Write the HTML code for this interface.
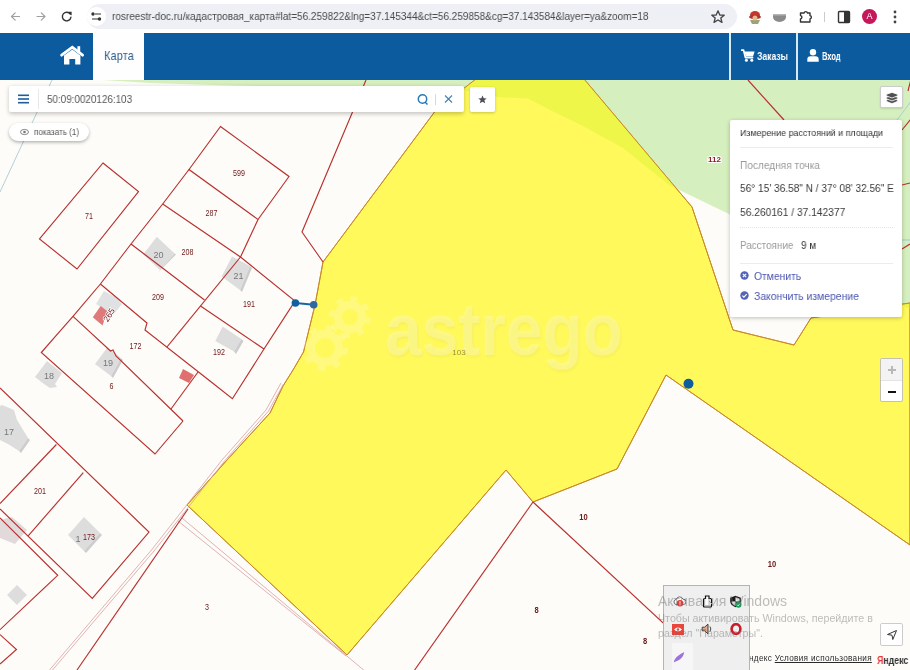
<!DOCTYPE html>
<html><head><meta charset="utf-8">
<style>
*{box-sizing:border-box}
html,body{margin:0;padding:0}
body{width:910px;height:670px;overflow:hidden;position:relative;background:#fdfcf8;font-family:"Liberation Sans",sans-serif}
.abs{position:absolute;will-change:transform}
.sx{will-change:transform}
.sx{display:inline-block;transform-origin:0 50%;white-space:nowrap}
</style></head><body>
<svg class="abs" style="left:0;top:80px" width="910" height="590" viewBox="0 80 910 590">
<defs>
<clipPath id="ycl"><polygon id="ypoly" points="323,262 436,110 476,79 584,79 692,207 733,330 794,345 811,318 910,303 910,545 666,375 617,469 533,502 506,470 347,655 187,505 227,460 270,413 283,386 293,370 303.5,352 315,305"/></clipPath>
</defs>
<rect x="0" y="80" width="910" height="590" fill="#fdfcf8"/>
<!-- green -->
<polygon points="88,79 150,83 230,85.5 300,87 470,91 497,97 528,98.5 552,111 583,126 623,148 669,185 731,215 850,280 910,309 910,79" fill="#d6efbe"/>
<!-- yellow -->
<polygon points="323,262 436,110 476,79 584,79 692,207 733,330 794,345 811,318 910,303 910,545 666,375 617,469 533,502 506,470 347,655 187,505 227,460 270,413 283,386 293,370 303.5,352 315,305" fill="#fff95c" stroke="#d9962a" stroke-width="1"/>
<g clip-path="url(#ycl)"><polygon points="88,79 150,83 230,85.5 300,87 470,91 497,97 528,98.5 552,111 583,126 623,148 669,185 731,215 850,280 910,309 910,79" fill="#eef64a"/></g>
<polygon points="323,262 436,110 476,79 584,79 692,207 733,330 794,345 811,318 910,303 910,545 666,375 617,469 533,502 506,470 347,655 187,505 227,460 270,413 283,386 293,370 303.5,352 315,305" fill="none" stroke="#c48a2c" stroke-width="1"/>

<!-- thin blue boundary -->
<polyline points="52,80 0,192" fill="none" stroke="#98c0cf" stroke-width="0.75"/>
<polyline points="897,120 910.5,102" fill="none" stroke="#9cc8dc" stroke-width="0.8"/>
<polyline points="902,240 910,240" fill="none" stroke="#8cc0de" stroke-width="0.8"/>

<!-- road thin double lines -->
<g fill="none" stroke="#d9a0a0" stroke-width="0.8">
<polyline points="281,383 266,410 222,460 151.5,550 49.5,670"/>
<polyline points="283.5,384 268.5,411 224.5,461 154,551 52.5,670"/>
<polyline points="178,521 346,656"/>
<polyline points="182,518 366,672"/>
</g>

<!-- buildings -->
<g>
<polygon points="156.8,236.7 174.6,253.4 160,270.1 143.3,254.5" fill="#dddddd"/>
<polygon points="174.6,253.4 160,270.1 158.5,272 176,254.5" fill="#cdcdcd"/>
<polygon points="232,256.5 250,266 240,290 221.6,276.4" fill="#dddddd"/>
<polygon points="250,266 240,290 242,292 252,268" fill="#cdcdcd"/>
<polygon points="222.6,326.5 241.4,339 234,351.6 215.3,341.1" fill="#dddddd"/>
<polygon points="241.4,339 234,351.6 236,354 243.5,341" fill="#cdcdcd"/>
<polygon points="104,291 117,298 122,304 113,315 96,304" fill="#dfe1e2"/>
<polygon points="107,348 114,352 121,358 111,376 95,364" fill="#dddddd"/>
<polygon points="121,358 111,376 113,378 123,360" fill="#cdcdcd"/>
<polygon points="47,361 62,373 55,384 57,387 50,388 44,384 35,377" fill="#dddddd"/>
<polygon points="2,405 14,410 17,420 28,438 19,451 8,444 0,440 0,406" fill="#dddddd"/>
<polygon points="28,438 19,451 21,453 30,440" fill="#cdcdcd"/>
<polygon points="84,517 100,533 84,551 68,535" fill="#dddddd"/>
<polygon points="100,533 84,551 86,553 102,535" fill="#cdcdcd"/>
<polygon points="17,585 27,595 17,605 7,595" fill="#dddddd"/>
<polygon points="0,520 12,517 27,530 15,544 0,538" fill="#e2dada"/>
<polygon points="100.7,306 107.4,311.3 102.5,325.5 92.8,317.3" fill="#e07a7a"/>
<polygon points="183,369 194,375 189,383 179,378" fill="#e07070"/>
</g>
<!-- parcels red -->
<g fill="none" stroke="#b8302e" stroke-width="1.15" stroke-linejoin="miter">
<polyline points="366,80 302,232 323,262"/>
<polygon points="103,163 138.5,191.5 77,269 39.5,239"/>
<polygon points="220.5,126.5 289,176.5 258,219.5 189,169.5"/>
<polyline points="258,219.5 240.5,257"/>
<polyline points="189,169.5 162.7,204 131,244 100.4,284 73,316.3 41.3,352.5 155,454 183,421"/>
<polyline points="162.7,204 240.5,257 295,301 264,349 232.4,398.7 210,381 145,330 147,323 100.4,284"/>
<polyline points="131,244 204.5,300"/>
<polyline points="240.5,257 167,347"/>
<polyline points="200.5,306 264,349"/>
<polyline points="198,372 171,409"/>
<polyline points="73,316.3 110.5,351 113,350 116,356 183,421"/>
<!-- bottom left -->
<polyline points="0,388 149,532 92.3,598.4 0,509"/>
<polyline points="56.4,444.5 0,503.6"/>
<polyline points="83.3,472.7 28.2,535.8"/>
<polyline points="0,518 57.7,575.3 0,629.7"/>
<polyline points="0,634.6 16.5,649.5 0,664"/>
<polyline points="188,509 77,670"/>
<!-- right bottom -->
<polyline points="533,502 414.6,670"/>
<polyline points="533,502 760,713"/>
<!-- green area lines -->
<polyline points="748,80 784,120"/>
<polyline points="902,130 910.5,119.5"/>
<polyline points="908,91 911,79"/>
<polyline points="902,185 910,183"/>
<polyline points="902,249 910,244"/>
</g>
<!-- labels -->
<g font-family="Liberation Sans" font-size="8.4" fill="#701818" text-anchor="middle">
<text transform="translate(89 218.5) scale(0.85 1)">71</text>
<text transform="translate(239 176) scale(0.85 1)">599</text>
<text transform="translate(211.5 216) scale(0.85 1)">287</text>
<text transform="translate(187.5 255) scale(0.85 1)">208</text>
<text transform="translate(158 299.5) scale(0.85 1)">209</text>
<text transform="translate(249 306.5) scale(0.85 1)">191</text>
<text transform="translate(135.5 349) scale(0.85 1)">172</text>
<text transform="translate(219 355) scale(0.85 1)">192</text>
<text transform="translate(111.5 389) scale(0.85 1)">6</text>
<text transform="translate(40 493.5) scale(0.85 1)">201</text>
<text transform="translate(89 539.5) scale(0.85 1)">173</text>
<text transform="translate(207 609.5) scale(0.85 1)">3</text>
<text transform="translate(536.5 613) scale(0.9 1)" font-weight="bold">8</text>
<text transform="translate(583.5 519.5) scale(0.9 1)" font-weight="bold">10</text>
<text transform="translate(772 567) scale(0.9 1)" font-weight="bold">10</text>
<text transform="translate(645 644) scale(0.9 1)" font-weight="bold">8</text>
<text x="109" y="318" transform="rotate(-58 109 315)" font-size="8.5" stroke="#fff" stroke-width="1.6" paint-order="stroke">265</text>
</g>
<g font-family="Liberation Sans" font-size="9" fill="#777" text-anchor="middle">
<text x="158.5" y="258">20</text>
<text x="238.5" y="279">21</text>
<text x="108" y="366">19</text>
<text x="49" y="379">18</text>
<text x="9" y="435">17</text>
<text x="78" y="542">1</text>
</g>
<text x="714.5" y="162" font-family="Liberation Sans" font-size="8" font-weight="bold" fill="#8a1a1a" text-anchor="middle" stroke="#fff" stroke-width="2" paint-order="stroke">112</text>
<text x="459" y="355" font-family="Liberation Sans" font-size="8" fill="#9a8e3c" text-anchor="middle">103</text>
<!-- measure -->
<line x1="295.4" y1="303" x2="313.7" y2="304.8" stroke="#1a64a6" stroke-width="2"/>
<circle cx="295.4" cy="303" r="3.8" fill="#12609f"/>
<circle cx="313.7" cy="304.8" r="3.8" fill="#2f6a9a"/>
<circle cx="688.5" cy="383.7" r="5" fill="#0e5e9f"/>
</svg>
<!-- watermark -->
<div class="abs" style="left:385px;top:279.5px;font-size:74px;font-weight:bold;color:rgba(255,255,255,0.27);line-height:100px;text-shadow:1px 2px 3px rgba(140,120,0,0.06)"><span class="sx" style="transform:scaleX(0.89)">astrego</span></div>
<svg class="abs" style="left:290px;top:285px" width="100" height="90" viewBox="0 0 100 90">
<g fill="none" stroke="rgba(255,255,255,0.22)">
<circle cx="60" cy="32" r="12" stroke-width="8"/>
<circle cx="60" cy="32" r="18.5" stroke-width="5" stroke-dasharray="6.5 8.03"/>
<circle cx="35" cy="63" r="14" stroke-width="8"/>
<circle cx="35" cy="63" r="20.5" stroke-width="5" stroke-dasharray="7 9.1"/>
</g>
</svg>
<!-- BROWSER CHROME -->
<div class="abs" style="left:0;top:0;width:910px;height:33px;background:#fff">
  <svg class="abs" style="left:0;top:0" width="90" height="33" viewBox="0 0 90 33">
    <g fill="none" stroke="#a0a0a0" stroke-width="1.2" stroke-linecap="round" stroke-linejoin="round">
      <path d="M19.5 16.5 H11.5 M15.2 12.8 L11.5 16.5 L15.2 20.2"/>
      <path d="M37 16.5 H45 M41.3 12.8 L45 16.5 L41.3 20.2"/>
    </g>
    <g fill="none" stroke="#333" stroke-width="1.4" stroke-linecap="round">
      <path d="M70.3 14.2 A4.3 4.3 0 1 0 70.9 17.3"/>
    </g>
    <path d="M68 11.8 L71.6 11.8 L71.6 15.4 Z" fill="#333"/>
  </svg>
  <div class="abs" style="left:87px;top:4px;width:650px;height:25px;border-radius:13px;background:#eef0f6"></div>
  <div class="abs" style="left:87px;top:7px;width:19px;height:19px;border-radius:50%;background:#fff"></div>
  <svg class="abs" style="left:89px;top:9px" width="15" height="15" viewBox="0 0 15 15">
    <g stroke="#333" stroke-width="1.2" fill="none"><path d="M6 5 H12 M3 10 H9"/></g>
    <circle cx="4" cy="5" r="1.7" fill="#333"/><circle cx="10.5" cy="10" r="1.7" fill="#333"/>
  </svg>
  <div class="abs" style="left:112px;top:9px;font-size:11px;line-height:15px;color:#4a4a4a;white-space:nowrap"><span class="sx" style="transform:scaleX(0.91)">rosreestr-doc.ru/кадастровая_карта#lat=56.259822&amp;lng=37.145344&amp;ct=56.259858&amp;cg=37.143584&amp;layer=ya&amp;zoom=18</span></div>
  <svg class="abs" style="left:710px;top:9px" width="16" height="16" viewBox="0 0 16 16"><path d="M8 1.8 L9.8 6 L14.2 6.2 L10.8 9 L12 13.4 L8 11 L4 13.4 L5.2 9 L1.8 6.2 L6.2 6 Z" fill="none" stroke="#444" stroke-width="1.3" stroke-linejoin="round"/></svg>
  <svg class="abs" style="left:746px;top:8px" width="18" height="18" viewBox="0 0 18 18">
    <ellipse cx="9" cy="7" rx="5" ry="4" fill="#c0392b"/><ellipse cx="9" cy="9" rx="6" ry="2" fill="#a33"/>
    <path d="M4 12 L14 12 L12 16 L6 16Z" fill="#9aa37a"/><circle cx="9" cy="10" r="2.5" fill="#e8b98a"/>
  </svg>
  <svg class="abs" style="left:772px;top:10px" width="15" height="14" viewBox="0 0 15 14"><path d="M1 4 H14 V7 A6.5 5 0 0 1 1 7 Z" fill="#8a8a8a"/><path d="M1 4 H14 V5.5 H1Z" fill="#b5b5b5"/></svg>
  <svg class="abs" style="left:798px;top:9px" width="16" height="16" viewBox="0 0 16 16"><path d="M2.5 4 H6 A1.8 1.8 0 0 1 9.5 4 H12 V6.5 A1.8 1.8 0 0 1 12 10 V13 H2.5 V10 A1.8 1.8 0 0 0 2.5 6.5 Z" fill="none" stroke="#333" stroke-width="1.4" stroke-linejoin="round"/></svg>
  <div class="abs" style="left:824px;top:12px;width:1px;height:10px;background:#ccc"></div>
  <svg class="abs" style="left:837px;top:10px" width="14" height="14" viewBox="0 0 14 14"><rect x="1.5" y="1.5" width="11" height="11" rx="1" fill="none" stroke="#333" stroke-width="1.4"/><rect x="7" y="1.5" width="5.5" height="11" fill="#333"/></svg>
  <div class="abs" style="left:862px;top:9px;width:15px;height:15px;border-radius:50%;background:#c5175a;color:#fff;font-size:9px;line-height:15px;text-align:center">A</div>
  <svg class="abs" style="left:892px;top:10px" width="6" height="14" viewBox="0 0 6 14"><circle cx="3" cy="2" r="1.4" fill="#444"/><circle cx="3" cy="7" r="1.4" fill="#444"/><circle cx="3" cy="12" r="1.4" fill="#444"/></svg>
</div>

<!-- HEADER -->
<div class="abs" style="left:0;top:33px;width:910px;height:47px;background:#0b5b9e">
  <svg class="abs" style="left:58px;top:12px" width="28" height="21" viewBox="0 0 28 21">
    <path d="M3.6 10.2 L14.3 2.2 L24.6 10.2" fill="none" stroke="#fff" stroke-width="2.8" stroke-linecap="round" stroke-linejoin="miter"/>
    <rect x="19.4" y="1.2" width="2.8" height="6.5" fill="#fff"/>
    <path d="M6 10.5 L14.3 4.6 L22.4 10.5 V19.6 H17.2 V14 H11.4 V19.6 H6 Z" fill="#fff"/>
  </svg>
  <div class="abs" style="left:93px;top:0;width:51px;height:47px;background:#fefefe"></div>
  <div class="abs" style="left:104px;top:15px;font-size:13px;line-height:16px;color:#2f5f8e"><span class="sx" style="transform:scaleX(0.86)">Карта</span></div>
  <div class="abs" style="left:729px;top:0;width:2px;height:47px;background:#d8e8f4"></div>
  <div class="abs" style="left:796px;top:0;width:2px;height:47px;background:#d8e8f4"></div>
  <svg class="abs" style="left:741px;top:16px" width="14" height="13" viewBox="0 0 14 13">
    <path d="M0.6 1.2 H2.6 L4.4 8.6 H11.6" fill="none" stroke="#fff" stroke-width="1.7" stroke-linejoin="round" stroke-linecap="round"/>
    <path d="M3.6 2.6 H13.6 L12 7.6 H4.8Z" fill="#fff"/>
    <circle cx="5.4" cy="11.3" r="1.5" fill="#fff"/><circle cx="10.8" cy="11.3" r="1.5" fill="#fff"/>
  </svg>
  <div class="abs" style="left:757px;top:16px;font-size:11px;line-height:14px;color:#fff;font-weight:bold"><span class="sx" style="transform:scaleX(0.78)">Заказы</span></div>
  <svg class="abs" style="left:807px;top:16px" width="12" height="13" viewBox="0 0 12 13">
    <circle cx="6" cy="3.3" r="3.2" fill="#fff"/>
    <path d="M0.3 12.8 V10.5 Q0.3 7.2 3.5 7.2 H8.5 Q11.7 7.2 11.7 10.5 V12.8Z" fill="#fff"/>
  </svg>
  <div class="abs" style="left:822px;top:16px;font-size:11px;line-height:14px;color:#fff;font-weight:bold"><span class="sx" style="transform:scaleX(0.68)">Вход</span></div>
</div>

<!-- search -->
<div class="abs" style="left:9px;top:86px;width:455px;height:26px;background:#fff;border-radius:2px;box-shadow:0 1.5px 4px rgba(0,0,0,0.22)">
  <svg class="abs" style="left:9px;top:8px" width="11" height="10" viewBox="0 0 11 10"><g fill="#1f5e99"><rect x="0" y="0.5" width="11" height="1.6"/><rect x="0" y="4.2" width="11" height="1.6"/><rect x="0" y="7.9" width="11" height="1.6"/></g></svg>
  <div class="abs" style="left:29px;top:3px;width:1px;height:20px;background:#e8e8e8"></div>
  <div class="abs" style="left:38px;top:6px;font-size:10.5px;line-height:14px;color:#555"><span class="sx" style="transform:scaleX(0.94)">50:09:0020126:103</span></div>
  <svg class="abs" style="left:408px;top:8px" width="12" height="11" viewBox="0 0 12 11"><circle cx="5.5" cy="5" r="4.2" fill="none" stroke="#2a78b6" stroke-width="1.5"/><path d="M8 8 L10.5 10.5" stroke="#2a78b6" stroke-width="1.5"/></svg>
  <div class="abs" style="left:426px;top:8px;width:1px;height:11px;background:#d8d8d8"></div>
  <svg class="abs" style="left:435px;top:9px" width="9" height="8" viewBox="0 0 9 8"><path d="M1 0.5 L8 7.5 M8 0.5 L1 7.5" stroke="#4a7eae" stroke-width="1.1"/></svg>
</div>
<div class="abs" style="left:470px;top:87px;width:25px;height:25px;background:#fff;border-radius:2px;box-shadow:0 1px 3px rgba(0,0,0,0.22)">
  <svg class="abs" style="left:8px;top:7.5px" width="9" height="9" viewBox="0 0 11 11"><path d="M5.5 0.5 L7 4 L10.7 4.2 L7.8 6.5 L8.8 10.2 L5.5 8.1 L2.2 10.2 L3.2 6.5 L0.3 4.2 L4 4 Z" fill="#4e4e58"/></svg>
</div>
<!-- show -->
<div class="abs" style="left:9px;top:123px;width:80px;height:18px;background:#fff;border-radius:9px;box-shadow:0 1.5px 3.5px rgba(0,0,0,0.3)">
  <svg class="abs" style="left:11px;top:5px" width="9" height="8" viewBox="0 0 9 8"><ellipse cx="4.5" cy="4" rx="4" ry="2.6" fill="none" stroke="#777" stroke-width="0.9"/><circle cx="4.5" cy="4" r="1.3" fill="#777"/></svg>
  <div class="abs" style="left:25px;top:3px;font-size:8.5px;line-height:12px;color:#555"><span class="sx" style="transform:scaleX(0.95)">показать (1)</span></div>
</div>
<!-- layers -->
<div class="abs" style="left:880px;top:86px;width:23px;height:22px;background:#fff;border-radius:2px;border:1px solid rgba(0,0,0,0.2);box-shadow:0 1px 2px rgba(0,0,0,0.12)">
  <svg class="abs" style="left:5px;top:4.5px" width="12" height="12" viewBox="0 0 12 12"><g fill="#505050" stroke="#fff" stroke-width="0.8" stroke-linejoin="round"><path d="M6 6.5 Q11.8 7.6 11.8 8.6 Q11.8 9.8 6 11.6 Q0.2 9.8 0.2 8.6 Q0.2 7.6 6 6.5Z"/><path d="M6 3.8 Q11.8 4.9 11.8 5.9 Q11.8 7.1 6 8.9 Q0.2 7.1 0.2 5.9 Q0.2 4.9 6 3.8Z"/><path d="M6 0.4 Q11.8 2 11.8 3 Q11.8 4.2 6 6 Q0.2 4.2 0.2 3 Q0.2 2 6 0.4Z"/></g></svg>
</div>
<!-- panel -->
<div class="abs" style="left:730px;top:120px;width:172px;height:197px;background:#fff;border-radius:2px;box-shadow:0 1px 4px rgba(0,0,0,0.25)">
  <div class="abs" style="left:10px;top:5.5px;font-size:9.8px;line-height:14px;color:#333"><span class="sx" style="transform:scaleX(0.905)">Измерение расстояний и площади</span></div>
  <div class="abs" style="left:10px;top:27px;width:153px;height:1px;background:#ececec"></div>
  <div class="abs" style="left:10px;top:38px;font-size:11px;line-height:14px;color:#9a9a9a"><span class="sx" style="transform:scaleX(0.92)">Последняя точка</span></div>
  <div class="abs" style="left:10px;top:61px;font-size:11.5px;line-height:15px;color:#3a3a3a"><span class="sx" style="transform:scaleX(0.878)">56° 15' 36.58" N / 37° 08' 32.56" E</span></div>
  <div class="abs" style="left:10px;top:85px;font-size:11.5px;line-height:15px;color:#3a3a3a"><span class="sx" style="transform:scaleX(0.89)">56.260161 / 37.142377</span></div>
  <div class="abs" style="left:10px;top:107px;width:153px;height:1px;border-top:1px dotted #e4e4e4"></div>
  <div class="abs" style="left:10px;top:118px;font-size:11px;line-height:14px;color:#9a9a9a"><span class="sx" style="transform:scaleX(0.9)">Расстояние</span></div>
  <div class="abs" style="left:71px;top:118px;font-size:11px;line-height:14px;color:#333"><span class="sx" style="transform:scaleX(0.9)">9 м</span></div>
  <div class="abs" style="left:10px;top:143px;width:153px;height:1px;background:#ececec"></div>
  <svg class="abs" style="left:10px;top:151px" width="9" height="9" viewBox="0 0 9 9"><circle cx="4.5" cy="4.5" r="4.2" fill="#5563b8"/><path d="M2.8 2.8 L6.2 6.2 M6.2 2.8 L2.8 6.2" stroke="#fff" stroke-width="1.1"/></svg>
  <div class="abs" style="left:24px;top:149px;font-size:11px;line-height:14px;color:#4b56b0"><span class="sx" style="transform:scaleX(0.94)">Отменить</span></div>
  <svg class="abs" style="left:10px;top:171px" width="9" height="9" viewBox="0 0 9 9"><circle cx="4.5" cy="4.5" r="4.2" fill="#5563b8"/><path d="M2.3 4.6 L3.9 6.1 L6.7 3.1" fill="none" stroke="#fff" stroke-width="1.1"/></svg>
  <div class="abs" style="left:24px;top:169px;font-size:11px;line-height:14px;color:#4b56b0"><span class="sx" style="transform:scaleX(0.945)">Закончить измерение</span></div>
</div>
<!-- zoom -->
<div class="abs" style="left:880px;top:358px;width:23px;height:44px;background:#fff;border-radius:2px;border:1px solid rgba(60,50,0,0.3)">
  <div class="abs" style="left:0;top:0;width:21px;height:22px;background:#f3f3f3;border-bottom:1px solid #e4e4e4"></div>
  <div class="abs" style="left:6.5px;top:10px;width:8px;height:2px;background:#b8b8b8"></div>
  <div class="abs" style="left:9.5px;top:7px;width:2px;height:8px;background:#b8b8b8"></div>
  <div class="abs" style="left:7px;top:31.5px;width:8px;height:2px;background:#111"></div>
</div>
<!-- locate -->
<div class="abs" style="left:880px;top:623px;width:23px;height:23px;background:#fff;border:1px solid #ccc;border-radius:2px">
  <svg class="abs" style="left:5px;top:5px" width="12" height="12" viewBox="0 0 12 12"><path d="M10.5 1.5 L1.5 5.5 L6 6.2 L6.8 10.5 Z" fill="none" stroke="#333" stroke-width="1" stroke-linejoin="round"/></svg>
</div>
<!-- footer -->
<div class="abs" style="left:749px;top:654px;font-size:8.2px;line-height:10px;color:#2a2a2a;white-space:nowrap;letter-spacing:0.3px">ндекс <span style="text-decoration:underline">Условия использования</span></div>
<div class="abs" style="left:876.5px;top:653px;font-size:11px;line-height:14px;color:#333;white-space:nowrap;font-weight:bold"><span class="sx" style="transform:scaleX(0.8)"><span style="color:#e8383a">Я</span>ндекс</span></div>
<!-- tray -->
<div class="abs" style="left:663px;top:585px;width:87px;height:90px;background:#efefef;border:1px solid #b4b4b4">
  <div class="abs" style="left:8px;top:57px;width:21px;height:30px;background:#f6f6f6"></div>
  <svg class="abs" style="left:9px;top:9px" width="13" height="13" viewBox="0 0 13 13"><path d="M3 9.5 A2.6 2.6 0 0 1 3.2 4.4 A3.6 3.6 0 0 1 10 4.2 A2.6 2.6 0 0 1 10.5 9.5Z" fill="#fff" stroke="#666" stroke-width="1"/><circle cx="7" cy="8.3" r="3.2" fill="#e23b3b"/><rect x="6.5" y="6.3" width="1" height="2.4" fill="#fff"/><rect x="6.5" y="9.3" width="1" height="1" fill="#fff"/></svg>
  <svg class="abs" style="left:38px;top:9px" width="11" height="13" viewBox="0 0 11 13"><path d="M3.5 1 H7 V3.5 H8.5 Q9.5 3.5 9.5 4.5 V11 Q9.5 12 8.5 12 H2.5 Q1.5 12 1.5 11 V4.5 Q1.5 3.5 2.5 3.5 H3.5Z" fill="#fff" stroke="#111" stroke-width="1.2"/><path d="M7 6 L10 9" stroke="#999" stroke-width="1"/></svg>
  <svg class="abs" style="left:65px;top:9px" width="13" height="13" viewBox="0 0 13 13"><path d="M6.5 0.8 L11.8 2.8 V6.3 Q11.8 10.2 6.5 12.3 Q1.2 10.2 1.2 6.3 V2.8Z" fill="#1a1a1a"/><path d="M6.5 2.2 V6.5 H10.4 Q10.2 9.5 6.5 11 Z" fill="#fff" opacity="0"/><path d="M6.5 2.3 L10.5 3.8 V6.4 H6.5Z" fill="#fff"/><path d="M6.5 6.4 H2.5 Q2.7 9.3 6.5 10.9Z" fill="#fff"/><circle cx="9.5" cy="9.8" r="3" fill="#1e9a5a"/><path d="M8.2 9.8 L9.2 10.8 L10.9 8.9" fill="none" stroke="#fff" stroke-width="0.9"/></svg>
  <div class="abs" style="left:8px;top:38px;width:12px;height:11px;background:#e8453c"></div>
  <svg class="abs" style="left:9px;top:40px" width="10" height="7" viewBox="0 0 10 7"><path d="M1 3.5 Q5 -0.5 9 3.5 Q5 7.5 1 3.5Z" fill="#fff"/><circle cx="5" cy="3.5" r="1.3" fill="#e8453c"/></svg>
  <svg class="abs" style="left:37px;top:37px" width="12" height="12" viewBox="0 0 12 12"><path d="M1.2 4.2 H3.5 L7 1.2 V10.8 L3.5 7.8 H1.2Z" fill="#e5a98a" stroke="#333" stroke-width="0.9" stroke-linejoin="round"/><path d="M9 3.5 Q10.6 6 9 8.5" fill="none" stroke="#333" stroke-width="0.9"/></svg>
  <svg class="abs" style="left:66px;top:37px" width="12" height="12" viewBox="0 0 12 12"><ellipse cx="6" cy="6" rx="4.4" ry="4.8" fill="none" stroke="#c81e2a" stroke-width="2.6"/></svg>
  <svg class="abs" style="left:9px;top:65px" width="12" height="12" viewBox="0 0 12 12"><path d="M0.8 11.5 Q1.5 5.5 11.2 1 Q10.5 7 4.5 9.8 Q2.5 10.6 0.8 11.5Z" fill="#9c72dc"/></svg>
</div>
<!-- windows activation -->
<div class="abs" style="left:658px;top:592px;font-size:14px;line-height:18px;color:rgba(110,110,110,0.45);white-space:nowrap">Активация Windows</div>
<div class="abs" style="left:658px;top:611px;font-size:10.7px;line-height:14px;color:rgba(110,110,110,0.45);white-space:nowrap">Чтобы активировать Windows, перейдите в</div>
<div class="abs" style="left:658px;top:626px;font-size:10.7px;line-height:14px;color:rgba(110,110,110,0.45);white-space:nowrap">раздел "Параметры".</div>
</body></html>
